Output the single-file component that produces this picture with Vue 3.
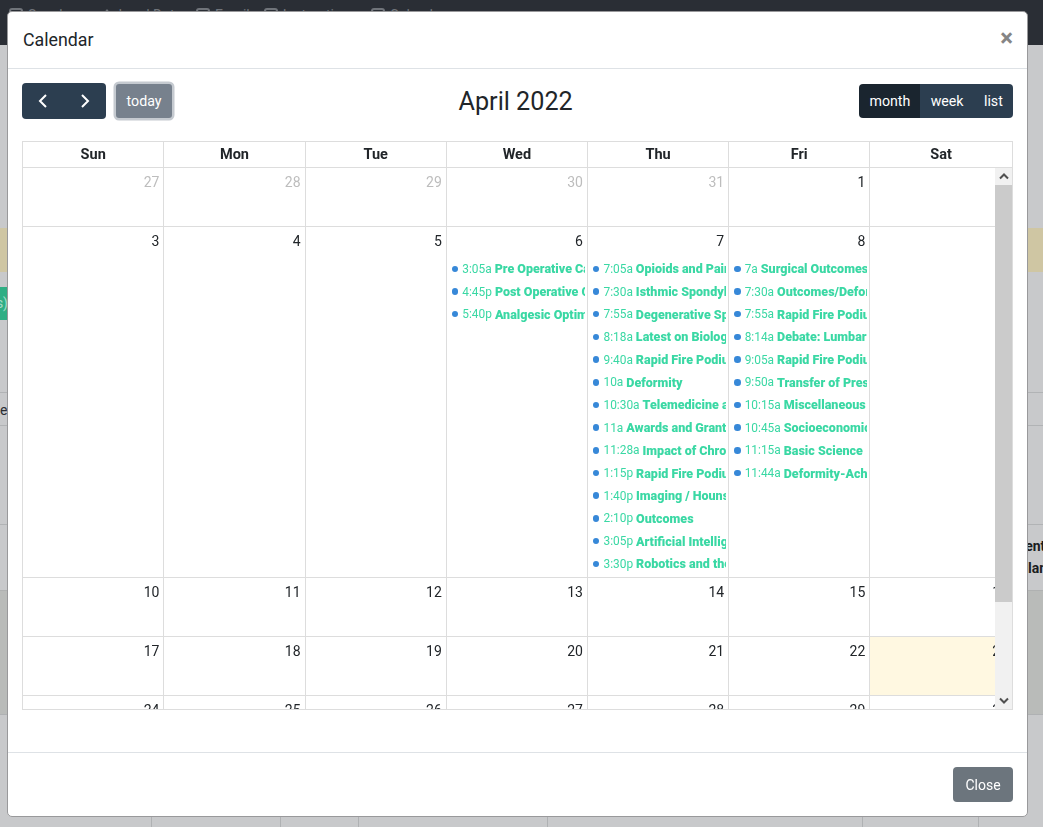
<script setup>
const headers = ['Sun', 'Mon', 'Tue', 'Wed', 'Thu', 'Fri', 'Sat']

const navItems = ['Speakers', 'Load Data', 'Email', 'Instructions', 'Calendar']

const wed = [
  ['3:05a', 'Pre Operative Care'],
  ['4:45p', 'Post Operative Care'],
  ['5:40p', 'Analgesic Optimization']
]
const thu = [
  ['7:05a', 'Opioids and Pain'],
  ['7:30a', 'Isthmic Spondylolisthesis'],
  ['7:55a', 'Degenerative Spine'],
  ['8:18a', 'Latest on Biologics'],
  ['9:40a', 'Rapid Fire Podium'],
  ['10a', 'Deformity'],
  ['10:30a', 'Telemedicine and Spine'],
  ['11a', 'Awards and Grants'],
  ['11:28a', 'Impact of Chronic'],
  ['1:15p', 'Rapid Fire Podium'],
  ['1:40p', 'Imaging / Hounsfield'],
  ['2:10p', 'Outcomes'],
  ['3:05p', 'Artificial Intelligence'],
  ['3:30p', 'Robotics and the Spine']
]
const fri = [
  ['7a', 'Surgical Outcomes'],
  ['7:30a', 'Outcomes/Deformity'],
  ['7:55a', 'Rapid Fire Podium'],
  ['8:14a', 'Debate: Lumbar'],
  ['9:05a', 'Rapid Fire Podium'],
  ['9:50a', 'Transfer of Pressure'],
  ['10:15a', 'Miscellaneous'],
  ['10:45a', 'Socioeconomic'],
  ['11:15a', 'Basic Science'],
  ['11:44a', 'Deformity-Achieving']
]

const weeks = [
  { days: [{ n: 27, other: true }, { n: 28, other: true }, { n: 29, other: true }, { n: 30, other: true }, { n: 31, other: true }, { n: 1 }, { n: 2 }] },
  { tall: true, days: [{ n: 3 }, { n: 4 }, { n: 5 }, { n: 6, events: wed }, { n: 7, events: thu }, { n: 8, events: fri }, { n: 9 }] },
  { days: [{ n: 10 }, { n: 11 }, { n: 12 }, { n: 13 }, { n: 14 }, { n: 15 }, { n: 16 }] },
  { days: [{ n: 17 }, { n: 18 }, { n: 19 }, { n: 20 }, { n: 21 }, { n: 22 }, { n: 23, current: true }] },
  { days: [{ n: 24 }, { n: 25 }, { n: 26 }, { n: 27 }, { n: 28 }, { n: 29 }, { n: 30 }] }
]
</script>

<template>
  <div class="page">
    <nav class="topbar">
      <span v-for="(item, i) in navItems" :key="item" class="nav-item">
        <svg v-if="i === 1" width="14" height="14" viewBox="0 0 14 14"><path d="M7 1 2 7h3v6h4V7h3z" fill="currentColor" /></svg>
        <svg v-else width="14" height="14" viewBox="0 0 14 14"><rect x="1" y="1" width="12" height="12" rx="2" fill="none" stroke="currentColor" stroke-width="2" /></svg>
        {{ item }}
      </span>
    </nav>
    <div class="alert-band"></div>
    <div class="green-btn"><span>s)</span></div>
    <div class="bg-row">e</div>
    <div class="bg-head">
      <span>Center</span>
      <span>Plan</span>
    </div>
    <div class="bg-dark"></div>
    <div class="bg-cols">
      <i></i><i></i><i></i><i></i><i></i><i></i>
    </div>
  </div>

  <div class="modal">
    <header class="modal-header">
      <h5>Calendar</h5>
      <span class="close-x">×</span>
    </header>

    <div class="modal-body">
      <div class="toolbar">
        <div class="left-btns">
          <div class="btn-group">
            <button type="button" class="btn nav-btn">
              <svg width="12" height="16" viewBox="0 0 12 16"><path d="M9 2 3 8l6 6" fill="none" stroke="#fff" stroke-width="2" /></svg>
            </button>
            <button type="button" class="btn nav-btn">
              <svg width="12" height="16" viewBox="0 0 12 16"><path d="m3 2 6 6-6 6" fill="none" stroke="#fff" stroke-width="2" /></svg>
            </button>
          </div>
          <button type="button" class="btn today-btn">today</button>
        </div>
        <h2>April 2022</h2>
        <div class="btn-group views">
          <button type="button" class="btn active">month</button>
          <button type="button" class="btn">week</button>
          <button type="button" class="btn">list</button>
        </div>
      </div>

      <div class="calendar">
        <div class="head-row">
          <div v-for="h in headers" :key="h" class="head-cell">{{ h }}</div>
        </div>
        <div class="scroller">
          <div v-for="(week, i) in weeks" :key="i" class="week" :class="{ tall: week.tall }">
            <div v-for="day in week.days" :key="day.n" class="day" :class="{ other: day.other, current: day.current }">
              <div class="day-num">{{ day.n }}</div>
              <div v-for="(ev, j) in day.events" :key="j" class="event">
                <span class="dot"></span>
                <span class="time">{{ ev[0] }}</span>
                <b class="title">{{ ev[1] }}</b>
              </div>
            </div>
          </div>
          <div class="scrollbar">
            <span class="arrow">
              <svg width="10" height="7" viewBox="0 0 10 7"><path d="M1 5.5 5 1.5l4 4" fill="none" stroke="#505050" stroke-width="2" /></svg>
            </span>
            <span class="thumb"></span>
            <span class="arrow bottom">
              <svg width="10" height="7" viewBox="0 0 10 7"><path d="M1 1.5 5 5.5l4-4" fill="none" stroke="#505050" stroke-width="2" /></svg>
            </span>
          </div>
        </div>
      </div>
    </div>

    <footer class="modal-footer">
      <button type="button" class="close-btn">Close</button>
    </footer>
  </div>
</template>

<style>
html, body {
  margin: 0;
  overflow: hidden;
}
</style>

<style scoped>
.page {
  height: 827px;
  overflow: hidden;
  background: #c8c9cb;
  font-family: Roboto, "Liberation Sans", sans-serif;
  font-size: 14px;
  color: #2a2d33;
}

.topbar {
  display: flex;
  height: 37px;
  padding: 8px 0 0 9px;
  background: #2a2e35;
  color: #70747a;
}

.nav-item {
  display: flex;
  gap: 5px;
  margin-right: 14px;
  line-height: 14px;
}

.alert-band {
  height: 44px;
  margin-top: 183px;
  background: #cfc6a3;
}

.green-btn {
  display: flex;
  justify-content: flex-end;
  width: 8px;
  height: 33px;
  margin-top: 15px;
  overflow: hidden;
  background: #2fae84;
  color: #a5dcc9;
  line-height: 33px;
}

.bg-row {
  height: 32px;
  margin-top: 72px;
  border-top: 1px solid #b1b3b5;
  border-bottom: 1px solid #b1b3b5;
  line-height: 34px;
}

.bg-head {
  display: flex;
  flex-direction: column;
  align-items: flex-start;
  height: 65px;
  margin-top: 98px;
  padding-left: 1016px;
  border-top: 1px solid #b1b3b5;
  color: #1a1c20;
  font-weight: 700;
  line-height: 22px;
  white-space: nowrap;
}

.bg-head span:first-child {
  margin-top: 10px;
}

.bg-head span:last-child {
  margin-left: 3px;
}

.bg-dark {
  height: 123px;
  background: #b9bbb9;
  border-top: 1px solid #afb1b1;
}

.bg-cols {
  display: flex;
  height: 114px;
  border-top: 1px solid #afb1b3;
}

.bg-cols i {
  width: 1px;
  background: #afb1b3;
}

.bg-cols i:nth-child(1) { margin-left: 151px; }
.bg-cols i:nth-child(2) { margin-left: 128px; }
.bg-cols i:nth-child(3) { margin-left: 77px; }
.bg-cols i:nth-child(4) { margin-left: 188px; }
.bg-cols i:nth-child(5) { margin-left: 314px; }
.bg-cols i:nth-child(6) { margin-left: 115px; }

.modal {
  position: fixed;
  top: 11px;
  left: 7px;
  display: flex;
  flex-direction: column;
  box-sizing: border-box;
  width: 1021px;
  height: 806px;
  border: 1px solid #99999b;
  border-radius: 5px;
  background: #fff;
  color: #212529;
  font-family: Roboto, "Liberation Sans", sans-serif;
  font-size: 14px;
}

.modal-header {
  display: flex;
  align-items: center;
  justify-content: space-between;
  box-sizing: border-box;
  height: 57px;
  padding: 0 14px 0 15px;
  border-bottom: 1px solid #dee2e6;
}

h5 {
  margin: 0;
  font-size: 17.8px;
  font-weight: 400;
  line-height: 1.5;
}

.close-x {
  margin-top: -5px;
  color: #858585;
  font-size: 24px;
  font-weight: 700;
  line-height: 1;
}

.modal-body {
  flex: 1;
  padding: 14px 14px 0;
}

.toolbar {
  display: flex;
  align-items: center;
  justify-content: space-between;
  height: 36px;
  margin-bottom: 22px;
}

.left-btns {
  display: flex;
  align-items: center;
  gap: 10px;
}

h2 {
  margin: 2px 0 0;
  font-size: 25.2px;
  font-weight: 400;
  line-height: 1.2;
}

.btn-group {
  display: flex;
  overflow: hidden;
  border-radius: 4px;
}

.btn {
  height: 34px;
  padding: 0 10.2px;
  border: 0;
  background: #2c3e50;
  color: #fff;
  font: inherit;
  font-size: 14.2px;
}

.nav-btn {
  display: flex;
  align-items: center;
  justify-content: center;
  width: 42px;
  height: 36px;
  padding: 0;
}

.btn.active {
  background: #1a252f;
}

.today-btn {
  width: 56px;
  padding: 0;
  border-radius: 3px;
  background: #77818d;
  box-shadow: 0 0 0 2.5px #c5cad0;
}

.calendar {
  box-sizing: border-box;
  width: 991px;
  height: 569px;
  border: 1px solid #ddd;
}

.head-row {
  display: grid;
  grid-template-columns: 141.4px repeat(5, 141.2px) 1fr;
  box-sizing: border-box;
  height: 26px;
  border-bottom: 1px solid #ddd;
}

.head-cell {
  border-right: 1px solid #ddd;
  font-size: 14.5px;
  font-weight: 700;
  line-height: 25px;
  text-align: center;
}

.head-cell:last-child {
  border-right: 0;
}

.scroller {
  position: relative;
  height: 541px;
  overflow: hidden;
}

.week {
  display: grid;
  grid-template-columns: 141.4px repeat(5, 141.2px) 1fr;
  box-sizing: border-box;
  height: 59px;
  border-bottom: 1px solid #ddd;
}

.week.tall {
  height: 351px;
}

.day {
  min-width: 0;
  border-right: 1px solid #ddd;
}

.day:last-child {
  border-right: 0;
}

.day.current {
  background: #fff8e1;
}

.day-num {
  height: 21px;
  margin-bottom: 2px;
  padding: 4px;
  line-height: 21px;
  text-align: right;
}

.day.other .day-num {
  color: #bdbdbd;
}

.event {
  display: flex;
  align-items: center;
  height: 21.7px;
  margin: 1px 2px 0 5px;
  overflow: hidden;
  color: #3ad8a4;
  font-size: 11.9px;
  white-space: nowrap;
}

.dot {
  flex: none;
  width: 6.5px;
  height: 6.5px;
  margin-right: 4px;
  border-radius: 50%;
  background: #3788d8;
}

.time {
  margin-right: 3px;
}

.title {
  font-size: 12.5px;
  font-weight: 900;
}

.scrollbar {
  position: absolute;
  top: 0;
  right: 0;
  bottom: 0;
  display: flex;
  flex-direction: column;
  width: 17px;
  background: #f1f1f1;
}

.arrow {
  display: flex;
  align-items: center;
  justify-content: center;
  height: 17px;
}

.arrow.bottom {
  margin-top: auto;
}

.thumb {
  height: 417px;
  background: #cbcbcb;
}

.modal-footer {
  display: flex;
  align-items: center;
  justify-content: flex-end;
  box-sizing: border-box;
  height: 64px;
  padding: 0 14px;
  border-top: 1px solid #dee2e6;
}

.close-btn {
  width: 60px;
  height: 35px;
  border: 0;
  border-radius: 4px;
  background: #6c757d;
  color: #fff;
  font: inherit;
}
</style>
